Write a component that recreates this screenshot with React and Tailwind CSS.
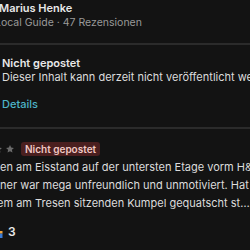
import React from "react";

function Star({ className }) {
  return (
    <svg viewBox="0 0 24 24" className={className} fill="currentColor">
      <path d="M12 2.5l2.9 6.1 6.6.8-4.9 4.6 1.3 6.6L12 17.3l-5.9 3.3 1.3-6.6-4.9-4.6 6.6-.8z" />
    </svg>
  );
}

export default function App() {
  return (
    <div className="w-[250px] h-[250px] overflow-hidden bg-[#131313] text-[#e8e8e8] font-['Inter',sans-serif]">
      <div className="pt-[1px]">
        <div className="-ml-[1px] h-[14px] text-[11px] leading-[14px] font-semibold whitespace-nowrap">Marius Henke</div>
        <div className="mt-[1px] -ml-[5px] h-[13px] text-[10.5px] leading-[13px] text-[#9a9a9a] whitespace-nowrap">
          Local Guide · 47 Rezensionen
        </div>
      </div>
      <div className="mt-[14px] h-[2px] bg-[#2b2b2b]" />
      <div className="pl-[2px] pt-[11px]">
        <div className="h-[14px] text-[11px] leading-[14px] font-semibold whitespace-nowrap">Nicht gepostet</div>
        <div className="h-[14px] text-[11px] leading-[14px] text-[#dcdcdc] whitespace-nowrap">
          Dieser Inhalt kann derzeit nicht veröffentlicht werden.
        </div>
        <div className="mt-[13px] h-[14px] text-[11px] leading-[14px] font-medium text-[#4db4c8]">Details</div>
      </div>
      <div className="mt-[16px] h-[2px] bg-[#2b2b2b]" />
      <div className="mt-[13px] flex items-center h-[14px]">
        <Star className="-ml-[7px] w-[10px] h-[10px] text-[#6a6a6a] shrink-0" />
        <Star className="ml-[2px] w-[10px] h-[10px] text-[#6a6a6a] shrink-0" />
        <span className="ml-[6px] h-[14px] px-[4px] rounded-[3px] bg-[#4a1f1f] text-[#f0c8c3] text-[10px] leading-[14px] font-semibold whitespace-nowrap">
          Nicht gepostet
        </span>
      </div>
      <div className="mt-[2px] text-[11px] leading-[18px] text-[#dcdcdc] whitespace-nowrap">
        <div>en am Eisstand auf der untersten Etage vorm H&amp;M</div>
        <div>ner war mega unfreundlich und unmotiviert. Hat</div>
        <div className="-ml-[3px]">em am Tresen sitzenden Kumpel gequatscht st…</div>
      </div>
      <div className="mt-[14px] flex items-center h-[12px]">
        <svg viewBox="0 0 8 8" className="-ml-[5px] mt-[5px] w-[8px] h-[7px] shrink-0">
          <rect x="0" y="0" width="8" height="3" fill="#f2a33a" />
          <rect x="0" y="3" width="8" height="5" fill="#3a7bd5" />
        </svg>
        <span className="ml-[5px] text-[12px] leading-[12px] font-semibold">3</span>
      </div>
    </div>
  );
}
